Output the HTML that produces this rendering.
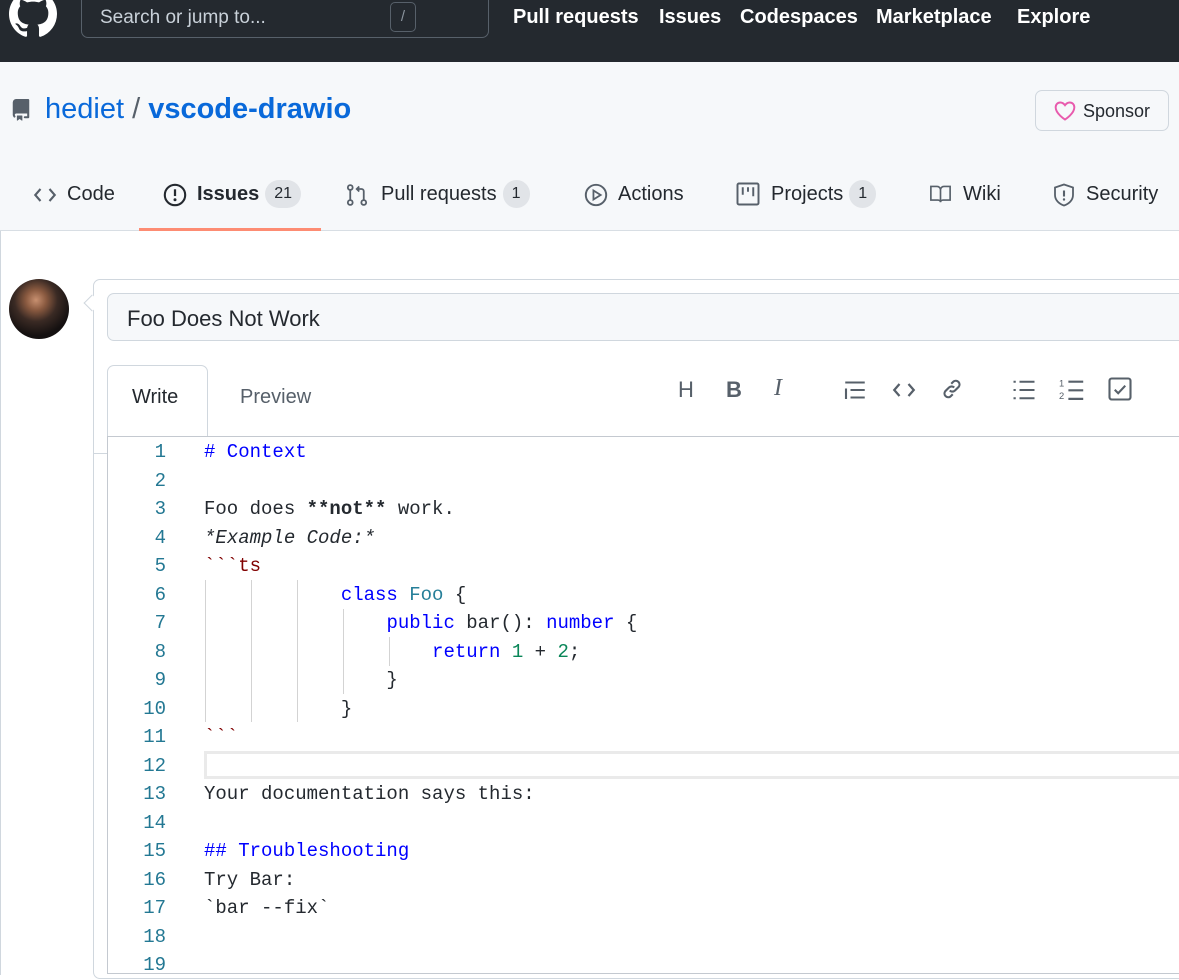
<!DOCTYPE html>
<html><head><meta charset="utf-8">
<style>
*{box-sizing:border-box;margin:0;padding:0}
body{width:1179px;height:975px;overflow:hidden;background:#fff;font-family:"Liberation Sans",sans-serif;position:relative;color:#24292f}
.top{position:absolute;left:0;top:0;width:1179px;height:62px;background:#24292f}
.search{position:absolute;left:81px;top:-8px;width:408px;height:46px;border:1px solid #57606a;border-radius:7px}
.search span{position:absolute;left:18px;top:14px;color:#c9d1d9;font-size:19px}
.slash{position:absolute;left:308px;top:9px;width:26px;height:30px;border:1px solid #57606a;border-radius:5px;color:#8b949e;font-size:15px;text-align:center;line-height:28px}
.nav{position:absolute;top:6px;color:#fff;font-weight:bold;font-size:20px}
.rh{position:absolute;left:0;top:62px;width:1179px;height:169px;background:#f6f8fa;border-bottom:1px solid #d8dee4}
.abs{position:absolute}
.tab{position:absolute;top:183px;font-size:20px;color:#24292f}
.cnt{display:inline-block;background:#e1e4e8;border-radius:15px;padding:0 9px;font-size:16px;line-height:28px;height:28px;vertical-align:2px;margin-left:6px}
.code{font-family:"Liberation Mono",monospace;font-size:19px;line-height:28.5px;white-space:pre;position:absolute;left:204px;top:438px}
.ln{font-family:"Liberation Mono",monospace;font-size:19px;line-height:28.5px;position:absolute;left:110px;width:56px;text-align:right;top:438px;color:#237893;white-space:pre}
.kw{color:#0000ff}.ty{color:#267f99}.st{color:#800000}.nm{color:#098658}
.g{position:absolute;width:1px;background:#d3d3d3}
.ic{position:absolute;top:378px}
</style></head><body>
<div class="top">
<svg class="abs" style="left:9px;top:-10px" width="48" height="48" viewBox="0 0 16 16"><path fill="#fff" d="M8 0C3.58 0 0 3.58 0 8c0 3.54 2.29 6.53 5.47 7.59.4.07.55-.17.55-.38 0-.19-.01-.82-.01-1.49-2.01.37-2.53-.49-2.69-.94-.09-.23-.48-.94-.82-1.13-.28-.15-.68-.52-.01-.53.63-.01 1.08.58 1.23.82.72 1.21 1.87.87 2.33.66.07-.52.28-.87.51-1.07-1.78-.2-3.64-.89-3.64-3.95 0-.87.31-1.59.82-2.15-.08-.2-.36-1.02.08-2.12 0 0 .67-.21 2.2.82.64-.18 1.32-.27 2-.27.68 0 1.36.09 2 .27 1.53-1.04 2.2-.82 2.2-.82.44 1.1.16 1.92.08 2.12.51.56.82 1.27.82 2.15 0 3.07-1.87 3.75-3.65 3.95.29.25.54.73.54 1.48 0 1.07-.01 1.93-.01 2.2 0 .21.15.46.55.38A8.013 8.013 0 0016 8c0-4.42-3.58-8-8-8z"/></svg>
<div class="search"><span>Search or jump to...</span><div class="slash">/</div></div>
<div class="nav" style="left:513px">Pull requests</div>
<div class="nav" style="left:659px">Issues</div>
<div class="nav" style="left:740px">Codespaces</div>
<div class="nav" style="left:876px">Marketplace</div>
<div class="nav" style="left:1017px">Explore</div>
</div>
<div class="rh">
<svg class="abs" style="left:10px;top:36px" width="22" height="24" viewBox="0 0 16 16"><path fill="#57606a" d="M2 2.5A2.5 2.5 0 014.5 0h8.75a.75.75 0 01.75.75v12.5a.75.75 0 01-.75.75h-2.5a.75.75 0 110-1.5h1.75v-2h-8a1 1 0 00-.714 1.7.75.75 0 01-1.072 1.05A2.495 2.495 0 012 11.5v-9zm10.5-1V9h-8c-.356 0-.694.074-1 .208V2.5a1 1 0 011-1h8zM5 12.25v3.25a.25.25 0 00.4.2l1.45-1.087a.25.25 0 01.3 0L8.6 15.7a.25.25 0 00.4-.2v-3.25a.25.25 0 00-.25-.25h-3.5a.25.25 0 00-.25.25z"/></svg>
<div class="abs" style="left:45px;top:31px;font-size:29px;color:#0969da">hediet <span style="color:#57606a">/</span> <span style="font-weight:600">vscode-drawio</span></div>
<div class="abs" style="left:1035px;top:28px;width:134px;height:41px;border:1px solid #d0d7de;border-radius:7px;background:#f6f8fa">
<svg class="abs" style="left:17px;top:9px" width="24" height="22" viewBox="0 0 16 16"><path fill="none" stroke="#e85aad" stroke-width="1.4" d="M8 14.2S1.2 10 1.2 5.3C1.2 3.3 2.7 1.8 4.6 1.8c1.5 0 2.6.9 3.4 2 .8-1.1 1.9-2 3.4-2 1.9 0 3.4 1.5 3.4 3.5C14.8 10 8 14.2 8 14.2z"/></svg>
<span class="abs" style="left:47px;top:10px;font-size:18px">Sponsor</span></div>
</div>
<svg class="abs" style="left:33px;top:183px" width="24" height="24" viewBox="0 0 16 16"><path fill="none" stroke="#57606a" stroke-width="1.4" d="M5 4L1.5 8 5 12M11 4l3.5 4L11 12"/></svg>
<div class="tab" style="left:67px">Code</div>
<svg class="abs" style="left:163px;top:183px" width="24" height="24" viewBox="0 0 16 16"><circle cx="8" cy="8" r="6.8" fill="none" stroke="#24292f" stroke-width="1.4"/><path d="M8 4.2v4.5" stroke="#24292f" stroke-width="1.5"/><circle cx="8" cy="11.2" r="1" fill="#24292f"/></svg>
<div class="tab" style="left:197px;top:180px;font-weight:600">Issues<span class="cnt" style="font-weight:normal">21</span></div>
<div class="abs" style="left:139px;top:228px;width:182px;height:3px;background:#fd8c73"></div>
<svg class="abs" style="left:345px;top:182px" width="24" height="26" viewBox="0 0 16 16"><g fill="none" stroke="#57606a" stroke-width="1.2"><circle cx="3.5" cy="3" r="1.6"/><circle cx="3.5" cy="13" r="1.6"/><circle cx="12.5" cy="13" r="1.6"/><path d="M3.5 4.6v6.8M12.5 11.4V5.5a1.5 1.5 0 00-1.5-1.5H8M9.5 2.3L7.8 4l1.7 1.7"/></g></svg>
<div class="tab" style="left:381px;top:180px">Pull requests<span class="cnt">1</span></div>
<svg class="abs" style="left:584px;top:183px" width="24" height="24" viewBox="0 0 16 16"><circle cx="8" cy="8" r="6.8" fill="none" stroke="#57606a" stroke-width="1.3"/><path d="M6.3 5v6l4.8-3z" fill="none" stroke="#57606a" stroke-width="1.2"/></svg>
<div class="tab" style="left:618px">Actions</div>
<svg class="abs" style="left:736px;top:182px" width="24" height="24" viewBox="0 0 16 16"><g fill="none" stroke="#57606a" stroke-width="1.3"><rect x="1" y="1" width="14" height="14" rx="1"/><path d="M4.5 3.5v5M8 3.5v3M11.5 3.5v6"/></g></svg>
<div class="tab" style="left:771px;top:180px">Projects<span class="cnt">1</span></div>
<svg class="abs" style="left:928px;top:183px" width="25" height="22" viewBox="0 0 16 16"><path fill="none" stroke="#57606a" stroke-width="1.2" d="M1 2.5h4.5C6.9 2.5 8 3.6 8 5v9c0-1-.8-1.6-1.8-1.6H1zM15 2.5h-4.5C9.1 2.5 8 3.6 8 5v9c0-1 .8-1.6 1.8-1.6H15z"/></svg>
<div class="tab" style="left:963px">Wiki</div>
<svg class="abs" style="left:1052px;top:182px" width="24" height="26" viewBox="0 0 16 16"><path fill="none" stroke="#57606a" stroke-width="1.2" d="M8 1l6 2v5c0 3.5-2.8 6-6 7-3.2-1-6-3.5-6-7V3z"/><path d="M8 5v4" stroke="#57606a" stroke-width="1.4"/><circle cx="8" cy="11" r=".8" fill="#57606a"/></svg>
<div class="tab" style="left:1086px">Security</div>

<div class="abs" style="left:0;top:231px;width:1px;height:744px;background:#d0d7de"></div>
<div class="abs" style="left:9px;top:279px;width:60px;height:60px;border-radius:50%;background:radial-gradient(circle at 45% 35%,#c89070 0,#8a5a40 20%,#3a2a24 42%,#141010 70%)"></div>
<div class="abs" style="left:93px;top:279px;width:1100px;height:700px;border:1px solid #d0d7de;border-radius:7px"></div>
<div class="abs" style="left:86px;top:297px;width:12px;height:12px;background:#fff;border-left:1px solid #d0d7de;border-bottom:1px solid #d0d7de;transform:rotate(45deg)"></div>
<div class="abs" style="left:107px;top:293px;width:1090px;height:48px;border:1px solid #d0d7de;border-radius:7px;background:#f6f8fa"></div>
<div class="abs" style="left:127px;top:306px;font-size:22px">Foo Does Not Work</div>
<div class="abs" style="left:94px;top:453px;width:1085px;height:1px;background:#d0d7de"></div>
<div class="abs" style="left:107px;top:365px;width:101px;height:89px;border:1px solid #d0d7de;border-bottom:none;border-radius:7px 7px 0 0;background:#fff"></div>
<div class="abs" style="left:132px;top:386px;font-size:20px">Write</div>
<div class="abs" style="left:240px;top:386px;font-size:20px;color:#57606a">Preview</div>
<div class="ic" style="left:678px;font-size:22px;color:#57606a;top:377px">H</div>
<div class="ic" style="left:726px;font-size:22px;color:#57606a;font-weight:bold;top:377px">B</div>
<div class="ic" style="left:774px;font-size:24px;color:#57606a;font-style:italic;font-family:'Liberation Serif',serif;top:375px">I</div>
<svg class="abs" style="left:843px;top:378px" width="24" height="24" viewBox="0 0 16 16"><path stroke="#57606a" stroke-width="1.4" d="M1.5 3h13M5 8h9.5M5 13h9.5M2 7v7"/></svg>
<svg class="abs" style="left:892px;top:378px" width="24" height="24" viewBox="0 0 16 16"><path fill="none" stroke="#57606a" stroke-width="1.5" d="M5 4L1.5 8 5 12M11 4l3.5 4L11 12"/></svg>
<svg class="abs" style="left:940px;top:377px" width="24" height="24" viewBox="0 0 16 16"><path fill="none" stroke="#57606a" stroke-width="1.4" d="M7.5 4.5l1.5-1.5a2.5 2.5 0 013.5 3.5l-2.5 2.5a2.5 2.5 0 01-3.5 0M8.5 11.5L7 13a2.5 2.5 0 01-3.5-3.5l2.5-2.5a2.5 2.5 0 013.5 0"/></svg>
<svg class="abs" style="left:1012px;top:378px" width="24" height="24" viewBox="0 0 16 16"><path stroke="#57606a" stroke-width="1.4" d="M5 2.5h10M5 8h10M5 13.5h10M1 2.5h1.5M1 8h1.5M1 13.5h1.5"/></svg>
<svg class="abs" style="left:1059px;top:377px" width="25" height="25" viewBox="0 0 16 16"><path stroke="#57606a" stroke-width="1.4" d="M6 3h9.5M6 8.5h9.5M6 14h9.5"/><text x="0" y="6" font-size="6" fill="#57606a" font-family="Liberation Sans">1</text><text x="0" y="14" font-size="6" fill="#57606a" font-family="Liberation Sans">2</text></svg>
<svg class="abs" style="left:1108px;top:377px" width="24" height="24" viewBox="0 0 16 16"><rect x="1" y="1" width="14" height="14" rx="1.5" fill="none" stroke="#57606a" stroke-width="1.4"/><path d="M4.5 8.5l2.3 2.3 4.7-5" fill="none" stroke="#57606a" stroke-width="1.4"/></svg>

<div class="abs" style="left:107px;top:436px;width:1090px;height:538px;border:1px solid #c4c9d0;border-right:none;background:#fff"></div>
<div class="abs" style="left:204px;top:751px;width:980px;height:28px;border:3px solid #eaeaea;border-right:none"></div>
<div class="g" style="left:205px;top:580px;height:142px"></div>
<div class="g" style="left:251px;top:580px;height:142px"></div>
<div class="g" style="left:297px;top:580px;height:142px"></div>
<div class="g" style="left:343px;top:609px;height:85px"></div>
<div class="g" style="left:389px;top:637px;height:29px"></div>
<div class="ln">1
2
3
4
5
6
7
8
9
10
11
12
13
14
15
16
17
18
19</div>
<div class="code"><span class="kw"># Context</span>

Foo does <b>**not**</b> work.
<i>*Example Code:*</i>
<span class="st">&#96;&#96;&#96;ts</span>
            <span class="kw">class</span> <span class="ty">Foo</span> {
                <span class="kw">public</span> bar(): <span class="kw">number</span> {
                    <span class="kw">return</span> <span class="nm">1</span> + <span class="nm">2</span>;
                }
            }
<span class="st">&#96;&#96;&#96;</span>

Your documentation says this:

<span class="kw">## Troubleshooting</span>
Try Bar:
&#96;bar --fix&#96;</div>
</body></html>
